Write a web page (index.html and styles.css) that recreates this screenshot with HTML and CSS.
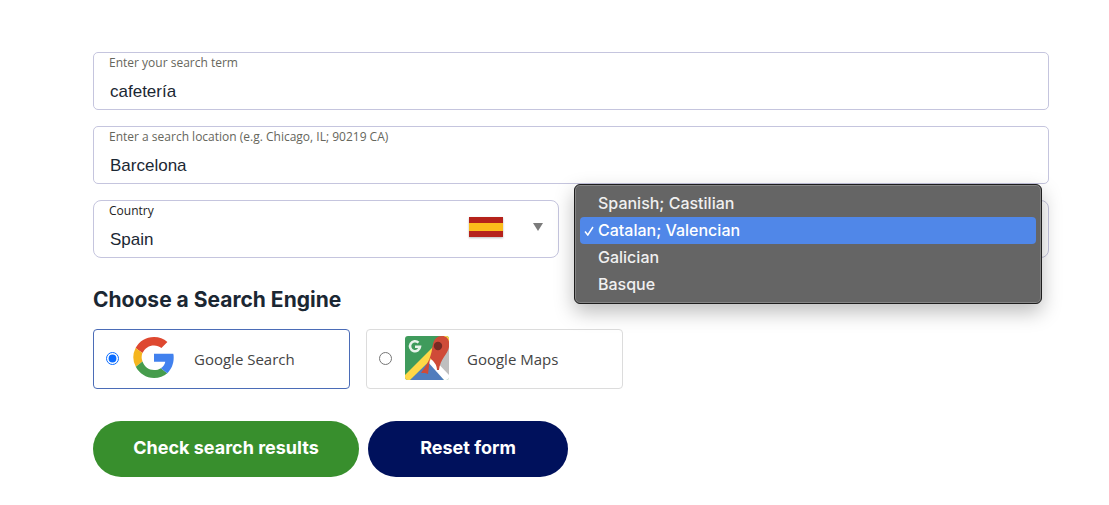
FILE: index.html
```html
<!DOCTYPE html>
<html lang="en">
<head>
<meta charset="utf-8">
<meta name="viewport" content="width=device-width, initial-scale=1">
<title>Local search results</title>
<link rel="stylesheet" href="styles.css">
</head>
<body>
<form class="search-form">
  <div class="field">
    <label class="field-label" for="term">Enter your search term</label>
    <input class="field-control" id="term" type="text" value="cafetería">
  </div>
  <div class="field">
    <label class="field-label" for="location">Enter a search location (e.g. Chicago, IL; 90219 CA)</label>
    <input class="field-control" id="location" type="text" value="Barcelona">
  </div>
  <div class="field-row">
    <div class="field field-country">
      <label class="field-label field-label-dark" for="country">Country</label>
      <select class="field-control" id="country">
        <option selected>Spain</option>
      </select>
      <div class="country-marks">
        <svg class="flag" viewBox="0 0 34 20" aria-hidden="true"><path fill="#b5221b" d="M0 0h34v20H0z"/><path fill="#fcbd1b" d="M0 6h34v8H0z"/></svg>
        <svg class="arrow" viewBox="0 0 10 8" aria-hidden="true"><path fill="#7b7b7b" d="M0 0h10L5 8z"/></svg>
      </div>
    </div>
    <div class="field field-language">
      <ul class="menu" role="listbox" aria-label="Language">
        <li class="menu-item" role="option" aria-selected="false">Spanish; Castilian</li>
        <li class="menu-item menu-item-active" role="option" aria-selected="true"><svg class="check" viewBox="0 0 10 10" aria-hidden="true"><path d="M1 5.5 3.800 9 9 1"/></svg>Catalan; Valencian</li>
        <li class="menu-item" role="option" aria-selected="false">Galician</li>
        <li class="menu-item" role="option" aria-selected="false">Basque</li>
      </ul>
    </div>
  </div>

  <h2 class="heading">Choose a Search Engine</h2>
  <div class="engines">
    <label class="engine engine-selected" for="engine-search">
      <input class="radio" id="engine-search" type="radio" name="engine" checked>
      <svg class="engine-logo" viewBox="0 0 44 44" aria-hidden="true">
        <path fill="#de4830" d="m3.600 12 6.800 5.100C13 11.900 17 9.400 22 9.400c3 0 5.400 1 7.400 2.700l6-6C31.700 2.700 27.200 1 22 1 14 1 7.100 5.400 3.600 12z"/>
        <path fill="#f5b51e" d="M3.600 12A20.500 20.500 0 0 0 3.800 30.800l6.700-5.200a12 12 0 0 1-.1-8.500z"/>
        <path fill="#469c4c" d="M3.800 30.800C7.300 37.500 14 42 22 42c5.200 0 9.900-1.700 13.300-4.800l-6.500-5c-1.800 1.200-4 1.900-6.800 1.900-5.300 0-9.700-3.500-11.500-8.500z"/>
        <path fill="#4181ee" d="M22 17.700v8.100h11.300a9.800 9.800 0 0 1-4.500 6.400l6.500 5c4-3.700 6.400-9.200 6.400-15.700 0-1.300-.1-2.600-.4-3.800z"/>
      </svg>
      <span class="engine-name">Google Search</span>
    </label>
    <label class="engine" for="engine-maps">
      <input class="radio" id="engine-maps" type="radio" name="engine">
      <svg class="engine-logo" viewBox="0 0 44 44" aria-hidden="true">
        <defs><clipPath id="maps-tile"><rect width="44" height="44" rx="3"/></clipPath></defs>
        <g clip-path="url(#maps-tile)">
          <path fill="#3f9b5c" d="M0 0h44v44H0z"/>
          <path fill="#bfbfbf" d="M24 22 44 2v42z"/>
          <path fill="#507dbd" d="M5 44 24 25l15 19z"/>
          <path fill="#fff" d="m22 25 5-4 17 18v5h-5z"/>
          <path fill="#ffd847" d="M0 39 39 0h5v6L5 44H0z"/>
          <path fill="#cf4b38" d="M16 37c4-6 8-11 10-19 1-3 1-6 2-10 1-5 4-8 9-8 6 0 8 5 7 11-1 7-9 12-10 23h-2c0-6-4-9-7-12l-2 16-3-1z"/>
          <circle cx="33" cy="10" r="4.200" fill="#762a24"/>
          <path fill="none" stroke="#e9f3eb" stroke-width="2.600" d="M13.500 6.600A5 5 0 1 0 15 10.700H10"/>
        </g>
      </svg>
      <span class="engine-name">Google Maps</span>
    </label>
  </div>
  <div class="actions">
    <button class="button button-submit" type="submit">Check search results</button>
    <button class="button button-reset" type="reset">Reset form</button>
  </div>
</form>
</body>
</html>
```
FILE: styles.css
```css
* {
  box-sizing: border-box;
}

body {
  margin: 0;
  background: #fff;
  color: #1b2733;
  font-family: "Open Sans", sans-serif;
}

.search-form {
  display: flex;
  flex-direction: column;
  gap: 16px;
  padding: 52px 60px 28px 93px;
}

.field {
  position: relative;
  display: flex;
  flex-direction: column;
  min-height: 58px;
  border: 1px solid #c5c5de;
  border-radius: 5px;
  background: #fff;
}

.field-label {
  padding: 1px 15px 0;
  color: #66665c;
  font-size: 12px;
  line-height: 18px;
}

.field-label-dark {
  color: #222;
}

.field-control {
  width: 100%;
  height: 37px;
  padding: 2px 16px 0;
  border: 0;
  outline: 0;
  appearance: none;
  background: transparent;
  color: #1b2733;
  font-family: "Liberation Sans", Arial, sans-serif;
  font-size: 17px;
}

.field-row {
  display: grid;
  grid-template-columns: 1fr 1fr;
  gap: 24px;
}

.field-country,
.field-language {
  border-radius: 8px;
}

.country-marks {
  position: absolute;
  top: 16px;
  right: 15px;
  display: flex;
  align-items: center;
  gap: 30px;
  pointer-events: none;
}

.flag {
  width: 34px;
  height: 20px;
  box-shadow: 0 1px 2px #0004;
}

.arrow {
  width: 10px;
  height: 8px;
}

.menu {
  position: absolute;
  top: -17px;
  right: 6px;
  left: -10px;
  z-index: 1;
  margin: 0;
  padding: 5px;
  border: 1px solid #1e1e1e;
  border-radius: 6px;
  background: #656565;
  box-shadow: inset 0 0 0 1px #858585, 0 8px 20px #0004;
  color: #f0f0f0;
  font-family: Inter, sans-serif;
  font-size: 16px;
  font-weight: 500;
  line-height: 27px;
  list-style: none;
}

.menu-item {
  position: relative;
  padding-left: 18px;
  border-radius: 4px;
}

.menu-item-active {
  background: #5087e8;
  color: #fff;
}

.check {
  position: absolute;
  top: 9px;
  left: 4px;
  width: 10px;
  height: 10px;
  fill: none;
  stroke: #fff;
  stroke-width: 1.5;
}

.heading {
  margin: 12px 0 0;
  color: #1b2733;
  font-family: Inter, sans-serif;
  font-size: 21px;
  font-weight: 700;
  line-height: 27px;
}

.engines {
  display: flex;
  gap: 16px;
}

.engine {
  display: flex;
  align-items: center;
  width: 257px;
  height: 60px;
  padding: 0 0 2px 12px;
  border: 1px solid #dcdcdc;
  border-radius: 4px;
  color: #444;
  font-size: 15px;
}

.engine-selected {
  border-color: #4b6cb7;
}

.radio {
  width: 13px;
  height: 13px;
  margin: 0 13px 0 0;
  accent-color: #0b6cff;
}

.engine-logo {
  width: 44px;
  height: 44px;
  margin-right: 18px;
}

.engine-name {
  padding-top: 2px;
}

.actions {
  display: flex;
  gap: 9px;
  margin-top: 16px;
}

.button {
  height: 56px;
  padding: 0 0 4px;
  border: 0;
  border-radius: 28px;
  color: #fff;
  font-family: Inter, sans-serif;
  font-size: 18px;
  font-weight: 700;
}

.button-submit {
  width: 266px;
  background: #388f2d;
}

.button-reset {
  width: 200px;
  background: #00115c;
}
```
